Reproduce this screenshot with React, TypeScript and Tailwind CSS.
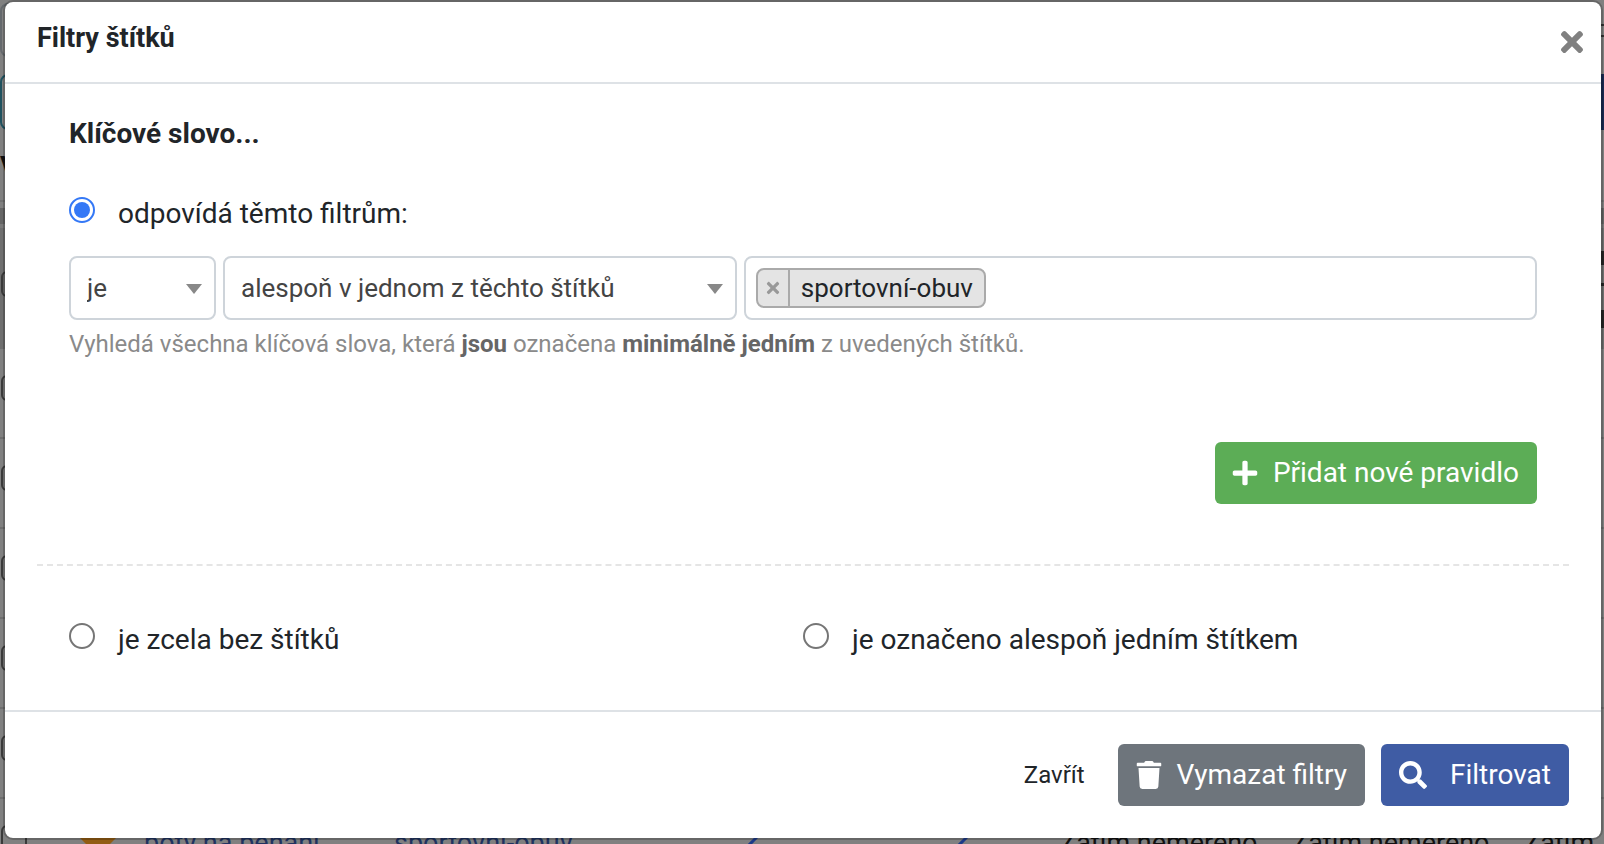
import React, { useState } from "react";
import { FaPlus, FaSearch, FaTimes, FaTrash } from "react-icons/fa";

type Mode = "match" | "none" | "any";

const ROWS = [1, 2, 3, 4, 5];

const Caret = () => (
  <svg
    viewBox="0 0 16 10"
    className="pointer-events-none absolute right-[14px] top-[28px] h-[10px] w-[16px]"
    aria-hidden="true"
  >
    <path d="M0 0H16L8 10Z" fill="#888888" />
  </svg>
);

const Pencil = () => (
  <svg viewBox="0 0 20 20" className="size-5" aria-hidden="true">
    <path d="M19 2L2 19" stroke="#1c3a8a" strokeWidth="3" />
  </svg>
);

const RowCheckbox = () => (
  <div className="mb-[10px] size-[26px] shrink-0 rounded-md border-2 border-[#3a3a3a]" />
);

// Keyword table that stays visible under the dimmed backdrop
const PageBehind = () => (
  <div
    className="absolute inset-0 overflow-hidden bg-[#808080] text-[28px] leading-[42px]"
    aria-hidden="true"
  >
    <div className="flex h-[74px] items-start justify-between pt-[3px]">
      <div className="h-[54px] w-[40px] rounded-lg border-2 border-[#65696d]" />
      <div className="mt-[21px] h-[13px] w-[3px] border-y-2 border-[#333333]" />
    </div>
    <div className="flex h-[56px] justify-between">
      <div className="w-[40px] rounded-lg border-2 border-[#20525f]" />
      <div className="w-[10px] bg-[#1a2a52]" />
    </div>
    <div className="h-[70px] pt-4 font-bold text-[#111111]">V</div>
    <div className="h-[8px] border-t-2 border-[#727272]" />
    <div className="h-[16px] bg-[#666666]" />
    <div className="h-[4px] bg-[#7a7a7a]" />
    <div className="flex h-[121px] items-start justify-between bg-[#6f6f6f] pl-[1px]">
      <div className="mt-[43px] size-[26px] rounded-md border-2 border-[#3a3a3a]" />
      <div className="flex w-[3px] flex-col pt-[23px]">
        <div className="h-[14px] bg-[#252525]" />
        <div className="mt-[18px] h-[3px] bg-[#252525]" />
        <div className="mt-6 h-[18px] bg-[#252525]" />
      </div>
    </div>
    {ROWS.map((row) => (
      <div
        key={row}
        className="flex h-[90px] items-center border-b-2 border-[#6f6f6f] pl-[1px]"
      >
        <RowCheckbox />
      </div>
    ))}
    <div className="flex h-[90px] items-center pb-[3px] pl-[1px] text-[27px]">
      <RowCheckbox />
      <div className="flex w-[117px] shrink-0 justify-center pl-6 pt-[6px]">
        <svg viewBox="0 0 44 44" className="size-[44px]">
          <path d="M22 0L44 10L22 32L0 10Z" fill="#925c13" />
        </svg>
      </div>
      <span className="w-[250px] shrink-0 text-[#1f3260]">boty na běhání</span>
      <span className="w-[346px] shrink-0 text-[#1f3260]">sportovní-obuv</span>
      <span className="w-[210px] shrink-0">
        <Pencil />
      </span>
      <span className="w-[110px] shrink-0">
        <Pencil />
      </span>
      <span className="w-[232px] shrink-0 text-[#111111]">Zatím neměřeno</span>
      <span className="w-[232px] shrink-0 text-[#111111]">Zatím neměřeno</span>
      <span className="shrink-0 text-[#111111]">Zatím</span>
    </div>
  </div>
);

type RadioProps = {
  id: string;
  label: string;
  checked: boolean;
  onChange: () => void;
};

const RadioOption = ({ id, label, checked, onChange }: RadioProps) => (
  <div className="flex flex-1 items-start gap-[23px]">
    <input
      type="radio"
      name="mode"
      id={id}
      checked={checked}
      onChange={onChange}
      className="mt-1 grid size-[26px] shrink-0 appearance-none place-content-center rounded-full border-2 border-[#767676] before:size-[16px] before:rounded-full checked:border-[#3478f6] checked:before:bg-[#3478f6]"
    />
    <label htmlFor={id}>{label}</label>
  </div>
);

export default function App() {
  const [mode, setMode] = useState<Mode>("match");
  const [tags, setTags] = useState(["sportovní-obuv"]);

  return (
    <div className="relative min-h-screen overflow-hidden font-[Roboto,sans-serif] text-[28px] leading-[42px] text-[#212529]">
      <PageBehind />
      <div
        role="dialog"
        aria-labelledby="dialog-title"
        className="relative ml-[3px] mr-px rounded-[10px] border-2 border-black/20 bg-white bg-clip-padding"
      >
        <header className="flex items-start justify-between border-b-2 border-[#dee2e6] pb-[23px] pl-8 pr-[13px] pt-[15px]">
          <h1 id="dialog-title" className="text-[27px] font-bold">
            Filtry štítků
          </h1>
          <button type="button" aria-label="Zavřít okno" className="mt-[9px] text-[#808080]">
            <FaTimes size={32} />
          </button>
        </header>

        <main className="px-8">
          <div className="px-8 pb-[60px] pt-[29px]">
            <h2 className="mb-[38px] font-bold">Klíčové slovo...</h2>
            <RadioOption
              id="mode-match"
              label="odpovídá těmto filtrům:"
              checked={mode === "match"}
              onChange={() => setMode("match")}
            />
            <div className="mt-[21px] flex gap-[7px] text-[26px]">
              <div className="relative w-[147px] shrink-0">
                <select
                  aria-label="Podmínka"
                  className="h-16 w-full appearance-none rounded-lg border-2 border-[#ced4da] bg-white pl-4 text-[#444444]"
                >
                  <option>je</option>
                  <option>není</option>
                </select>
                <Caret />
              </div>
              <div className="relative w-[35%] shrink-0">
                <select
                  aria-label="Rozsah"
                  className="h-16 w-full appearance-none rounded-lg border-2 border-[#ced4da] bg-white pl-4 text-[#444444]"
                >
                  <option>alespoň v jednom z těchto štítků</option>
                  <option>ve všech těchto štítcích</option>
                </select>
                <Caret />
              </div>
              <div className="flex h-16 min-w-0 flex-1 items-center gap-2 rounded-lg border-2 border-[#ced4da] px-[10px]">
                {tags.map((tag) => (
                  <span
                    key={tag}
                    className="flex h-10 shrink-0 items-stretch rounded-lg border-2 border-[#aaaaaa] bg-[#e4e4e4] leading-9"
                  >
                    <button
                      type="button"
                      aria-label={"Odebrat " + tag}
                      onClick={() => setTags(tags.filter((t) => t !== tag))}
                      className="flex w-8 items-center justify-center border-r-2 border-[#aaaaaa] text-[#999999]"
                    >
                      <FaTimes size={18} />
                    </button>
                    <span className="px-[11px]">{tag}</span>
                  </span>
                ))}
                <input
                  type="text"
                  aria-label="Štítky"
                  className="h-10 min-w-0 flex-1 outline-none"
                />
              </div>
            </div>
            <p className="mt-[6px] text-[24px] leading-9 text-[#8a8a8a]">
              Vyhledá všechna klíčová slova, která{" "}
              <strong className="text-[#666666]">jsou</strong> označena{" "}
              <strong className="text-[#666666]">minimálně jedním</strong> z uvedených
              štítků.
            </p>
            <div className="mt-20 flex justify-end">
              <button
                type="button"
                className="flex h-[62px] items-center gap-[14px] rounded-md bg-[#5cad56] pl-4 pr-[18px] text-white"
              >
                <FaPlus size={28} />
                Přidat nové pravidlo
              </button>
            </div>
          </div>
          <div className="flex border-t-2 border-dashed border-[#e5e5e5] px-8 pb-[49px] pt-[53px]">
            <RadioOption
              id="mode-none"
              label="je zcela bez štítků"
              checked={mode === "none"}
              onChange={() => setMode("none")}
            />
            <RadioOption
              id="mode-any"
              label="je označeno alespoň jedním štítkem"
              checked={mode === "any"}
              onChange={() => setMode("any")}
            />
          </div>
        </main>

        <footer className="flex items-center justify-end gap-4 border-t-2 border-[#dee2e6] p-8">
          <button type="button" className="px-[17px] text-[24px]">
            Zavřít
          </button>
          <button
            type="button"
            className="flex h-[62px] items-center gap-[14px] rounded-md bg-[#6e757c] pl-[17px] pr-[18px] text-white"
          >
            <FaTrash size={28} />
            Vymazat filtry
          </button>
          <button
            type="button"
            className="flex h-[62px] items-center gap-[23px] rounded-md bg-[#3f5ca4] px-[18px] text-white"
          >
            <FaSearch size={28} />
            Filtrovat
          </button>
        </footer>
      </div>
    </div>
  );
}
